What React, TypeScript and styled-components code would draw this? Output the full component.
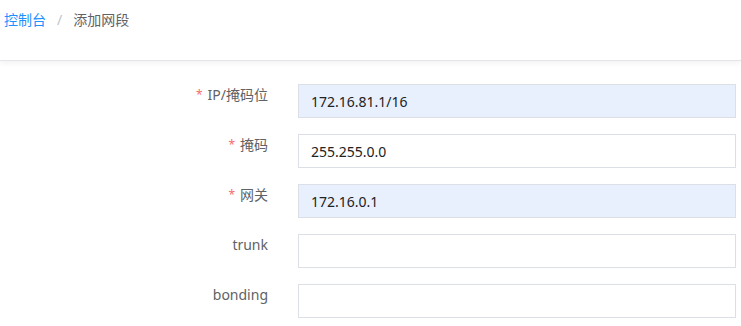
import React from 'react';
import styled, {createGlobalStyle} from 'styled-components';

const GlobalStyle = createGlobalStyle`
  body {
    margin: 0;
    background: #fff;
    font-family: "Noto Sans", "Noto Sans CJK SC", sans-serif;
  }
`;

type Field = {label: string; value: string; required?: boolean; filled?: boolean};

const fields: Field[] = [
  {label: 'IP/掩码位', value: '172.16.81.1/16', required: true, filled: true},
  {label: '掩码', value: '255.255.0.0', required: true},
  {label: '网关', value: '172.16.0.1', required: true, filled: true},
  {label: 'trunk', value: ''},
  {label: 'bonding', value: ''},
];

export default function App() {
  return (
    <>
      <GlobalStyle/>
      <Header>
        <Crumb>控制台</Crumb>
        <Separator>/</Separator>
        <Current>添加网段</Current>
      </Header>
      <Form>
        {fields.map(f => (
          <Row key={f.label}>
            <Label>
              {f.required && <Star>*</Star>}
              {f.label}
            </Label>
            <Input filled={f.filled} defaultValue={f.value}/>
          </Row>
        ))}
      </Form>
    </>
  );
}

const Header = styled.div`
  display: flex;
  align-items: center;
  height: 38px;
  padding: 0 0 22px 4px;
  border-bottom: 1px solid #e4e4ea;
  box-shadow: 0 2px 6px rgba(0, 0, 0, 0.06);
  font-size: 14px;
`;

const Crumb = styled.span`
  color: #1e90ff;
`;

const Separator = styled.span`
  color: #c0c4cc;
  margin: 0 11px;
`;

const Current = styled.span`
  color: #606266;
`;

const Form = styled.div`
  display: flex;
  flex-direction: column;
  gap: 16px;
  padding: 23px 5px 0 0;
`;

const Row = styled.div`
  display: grid;
  grid-template-columns: 268px 1fr;
  column-gap: 30px;
  align-items: start;
`;

const Label = styled.label`
  text-align: right;
  font-size: 14px;
  line-height: 22px;
  color: #606266;
`;

const Star = styled.span`
  color: #f56c6c;
  font-size: 12px;
  margin-right: 5px;
  vertical-align: 1px;
`;

const Input = styled.input.withConfig({shouldForwardProp: p => p !== 'filled'})<{filled?: boolean}>`
  box-sizing: border-box;
  height: 34px;
  width: 100%;
  padding: 0 12px;
  border: 1px solid #dcdfe6;
  background: ${p => p.filled ? '#e8f0fe' : '#fff'};
  font-family: "Noto Sans", "Noto Sans CJK SC", sans-serif;
  font-size: 14px;
  color: #222;
  outline: none;
`;
